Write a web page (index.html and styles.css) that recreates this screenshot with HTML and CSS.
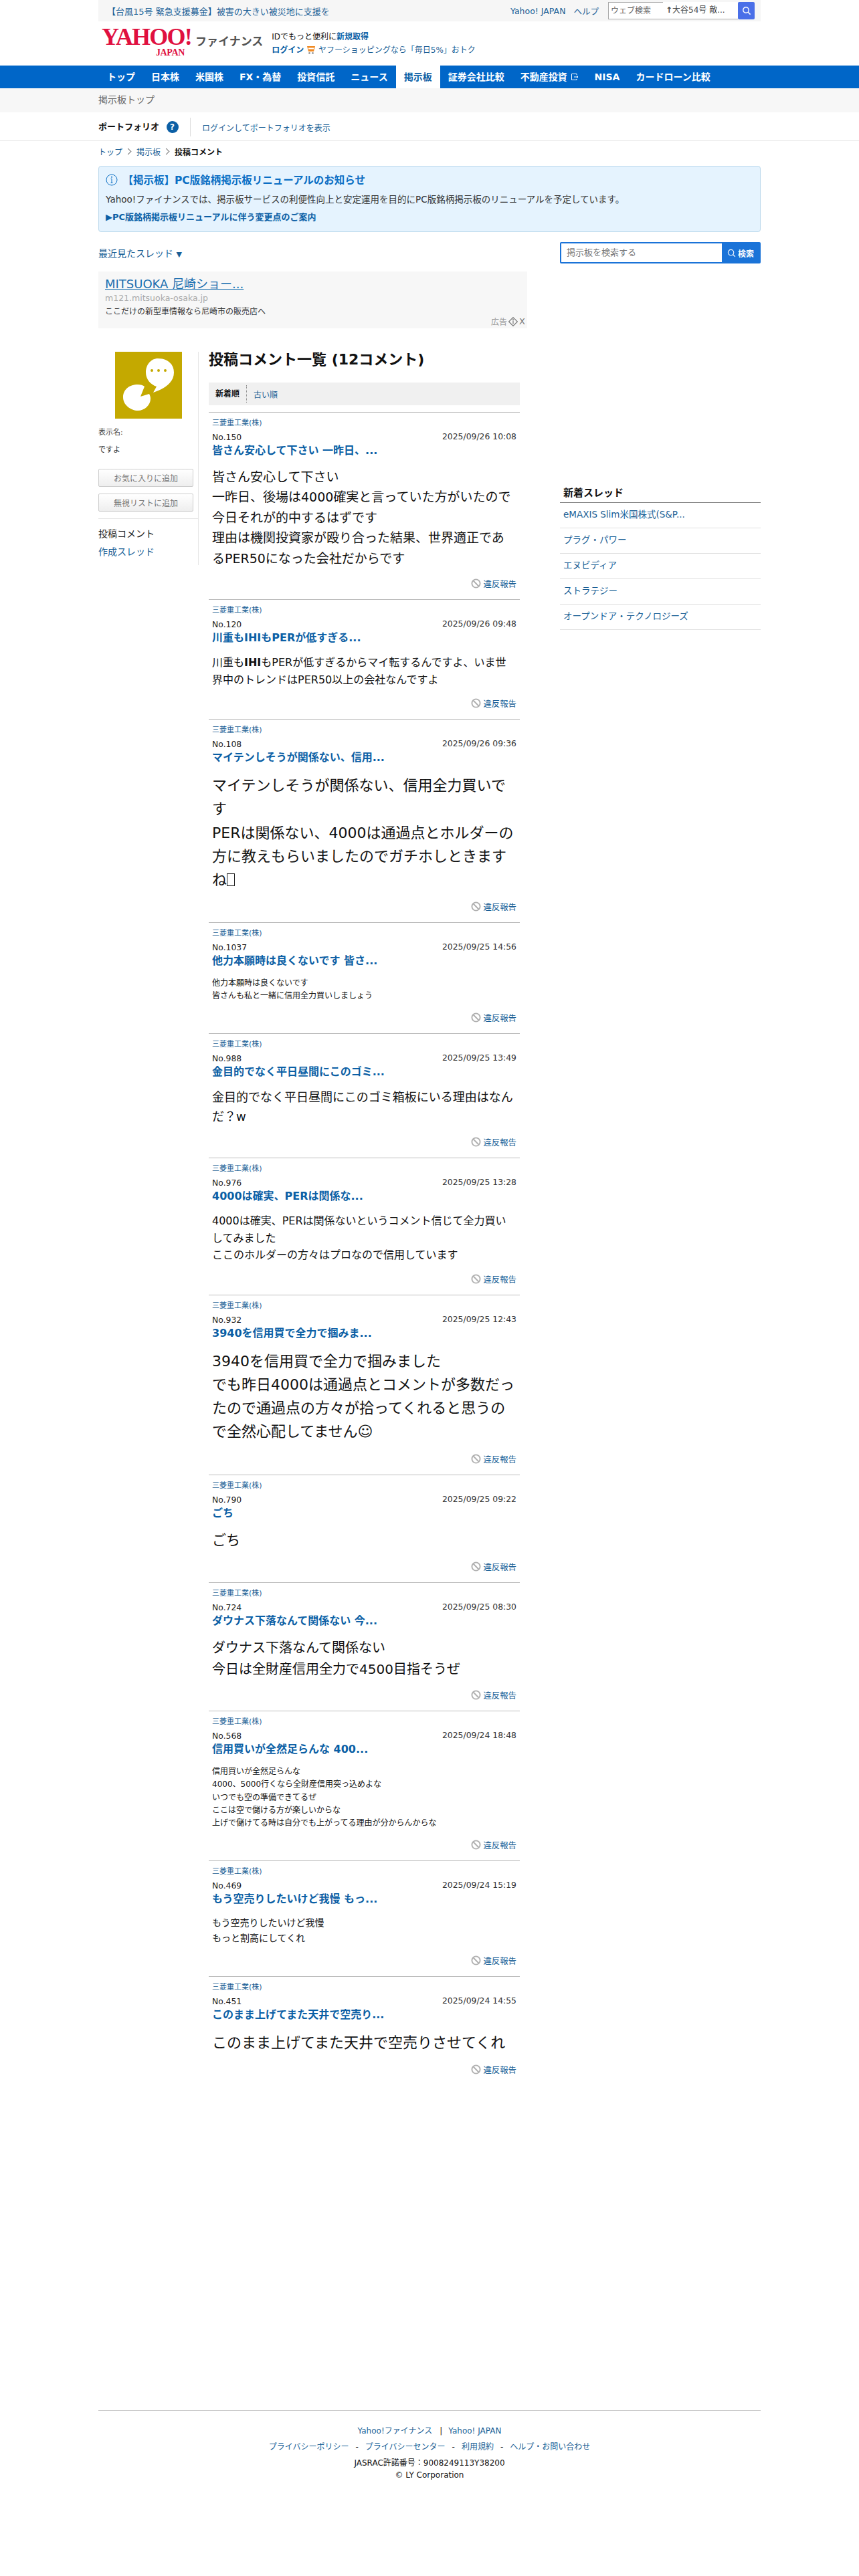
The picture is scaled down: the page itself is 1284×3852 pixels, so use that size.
FILE: index.html
```html
<!DOCTYPE html>
<html lang="ja">
<head>
    <meta charset="UTF-8">
    <title>投稿コメント一覧 - Yahoo!ファイナンス</title>
    <link rel="stylesheet" href="styles.css">
</head>
<body>

<div class="wrap topbar">
    <a class="topbar-news" href="#">【台風15号 緊急支援募金】被害の大きい被災地に支援を</a>
    <div class="topbar-right">
        <a href="#">Yahoo! JAPAN</a>
        <a href="#">ヘルプ</a>
        <div class="websearch">
            <span class="websearch-input">ウェブ検索</span>
            <span class="websearch-hint"><b>↑</b>大谷54号 敵...</span>
            <span class="websearch-btn">
                <svg width="14" height="14" viewBox="0 0 14 14"><circle cx="6" cy="6" r="4.2" fill="none" stroke="#fff" stroke-width="1.4"/><path d="M9 9l3.6 3.6" stroke="#fff" stroke-width="1.5"/></svg>
            </span>
        </div>
    </div>
</div>

<div class="wrap header">
    <a class="logo" href="#">
        <span class="logo-main">YAHOO!</span>
        <span class="logo-jp">JAPAN</span>
    </a>
    <span class="logo-finance">ファイナンス</span>
    <div class="header-links">
        <div>IDでもっと便利に<a class="strong" href="#">新規取得</a></div>
        <div>
            <a class="strong" href="#">ログイン</a>
            <svg class="cart" width="14" height="15" viewBox="0 0 14 15"><path d="M1 2h12l-2 8H3z" fill="#f08a24"/><rect x="3" y="4.5" width="8" height="2" fill="#fff"/><circle cx="4.5" cy="12.5" r="1.4" fill="#999"/><circle cx="9.5" cy="12.5" r="1.4" fill="#999"/></svg>
            <a href="#">ヤフーショッピングなら「毎日5%」おトク</a>
        </div>
    </div>
</div>

<nav class="nav">
    <div class="wrap nav-inner">
        <a href="#">トップ</a>
        <a href="#">日本株</a>
        <a href="#">米国株</a>
        <a href="#">FX・為替</a>
        <a href="#">投資信託</a>
        <a href="#">ニュース</a>
        <a class="active" href="#">掲示板</a>
        <a href="#">証券会社比較</a>
        <a href="#">不動産投資
            <svg width="12" height="12" viewBox="0 0 12 12"><path d="M9 3V1.5H1.5v9H9V9M5 6h6M9 4l2 2-2 2" fill="none" stroke="#fff"/></svg>
        </a>
        <a href="#">NISA</a>
        <a href="#">カードローン比較</a>
    </div>
</nav>

<div class="subnav">
    <div class="wrap">掲示板トップ</div>
</div>

<div class="portfolio">
    <div class="wrap portfolio-inner">
        <div class="portfolio-label">ポートフォリオ <span class="help">?</span></div>
        <a href="#">ログインしてポートフォリオを表示</a>
    </div>
</div>

<div class="wrap crumbs">
    <a href="#">トップ</a>
    <span class="crumb-arrow"></span>
    <a href="#">掲示板</a>
    <span class="crumb-arrow"></span>
    <strong>投稿コメント</strong>
</div>

<div class="wrap notice">
    <h2>
        <svg width="18" height="18" viewBox="0 0 18 18"><circle cx="9" cy="9" r="8" fill="none" stroke="#0b6fc4"/><path d="M9 7.5v6M7.5 7.5H9M7.5 13.5h3" fill="none" stroke="#0b6fc4"/><circle cx="9" cy="4.8" r="1" fill="#0b6fc4"/></svg>
        【掲示板】PC版銘柄掲示板リニューアルのお知らせ
    </h2>
    <p>Yahoo!ファイナンスでは、掲示板サービスの利便性向上と安定運用を目的にPC版銘柄掲示板のリニューアルを予定しています。</p>
    <a href="#">▶PC版銘柄掲示板リニューアルに伴う変更点のご案内</a>
</div>

<div class="wrap main">
    <div class="left">
        <a class="recent" href="#">最近見たスレッド <span class="recent-arrow">▼</span></a>

        <div class="ad">
            <a class="ad-title" href="#">MITSUOKA 尼崎ショー...</a>
            <div class="ad-url">m121.mitsuoka-osaka.jp</div>
            <div class="ad-text">ここだけの新型車情報なら尼崎市の販売店へ</div>
            <div class="ad-mark">広告
                <svg width="14" height="14" viewBox="0 0 12 12"><path d="M6 .5L11.5 6 6 11.5.5 6z" fill="none" stroke="#777"/><path d="M6 4.5V9" stroke="#777"/><circle cx="6" cy="3" r=".8" fill="#777"/></svg>
                <span>X</span>
            </div>
        </div>

        <div class="columns">
            <aside class="profile">
                <div class="avatar">
                    <svg width="100" height="100" viewBox="0 0 100 100">
                        <rect width="100" height="100" fill="#c4a900"/>
                        <path d="M64 10c15 0 24 9 24 21 0 16-16 25-31 30l5-9c-9-3-16-11-16-21 0-12 8-21 18-21z" fill="#fff"/>
                        <circle cx="55" cy="28" r="2" fill="#c4a900"/><circle cx="65" cy="28" r="2" fill="#c4a900"/><circle cx="75" cy="28" r="2" fill="#c4a900"/>
                        <path d="M34 49c4 0 8 1 10 3l-6 15 13-4c1 2 2 4 2 7 0 10-9 18-19 18S12 80 12 68s10-19 22-19z" fill="#fff"/>
                    </svg>
                </div>
                <div class="profile-label">表示名:</div>
                <div class="profile-name">ですよ</div>
                <button class="profile-btn">お気に入りに追加</button>
                <button class="profile-btn">無視リストに追加</button>
                <div class="profile-nav">
                    <div>投稿コメント</div>
                    <a href="#">作成スレッド</a>
                </div>
            </aside>

            <section class="comments">
                <h1>投稿コメント一覧 (12コメント)</h1>
                <div class="sort">
                    <strong>新着順</strong>
                    <a href="#">古い順</a>
                </div>

                <article class="item">
                    <a class="company" href="#">三菱重工業(株)</a>
                    <div class="meta"><span>No.150</span><span class="date">2025/09/26 10:08</span></div>
                    <a class="item-title" href="#">皆さん安心して下さい 一昨日、...</a>
                    <p class="body sz19">皆さん安心して下さい<br>一昨日、後場は4000確実と言っていた方がいたので<br>今日それが的中するはずです<br>理由は機関投資家が殴り合った結果、世界適正であるPER50になった会社だからです</p>
                    <div class="report"><svg class="ban" viewBox="0 0 16 16"><circle cx="8" cy="8" r="6.5"/><path d="M3.5 3.5l9 9"/></svg><a href="#">違反報告</a></div>
                </article>

                <article class="item">
                    <a class="company" href="#">三菱重工業(株)</a>
                    <div class="meta"><span>No.120</span><span class="date">2025/09/26 09:48</span></div>
                    <a class="item-title" href="#">川重もIHIもPERが低すぎる...</a>
                    <p class="body sz16">川重も<b>IHI</b>もPERが低すぎるからマイ転するんですよ、いま世界中のトレンドはPER50以上の会社なんですよ</p>
                    <div class="report"><svg class="ban" viewBox="0 0 16 16"><circle cx="8" cy="8" r="6.5"/><path d="M3.5 3.5l9 9"/></svg><a href="#">違反報告</a></div>
                </article>

                <article class="item">
                    <a class="company" href="#">三菱重工業(株)</a>
                    <div class="meta"><span>No.108</span><span class="date">2025/09/26 09:36</span></div>
                    <a class="item-title" href="#">マイテンしそうが関係ない、信用...</a>
                    <p class="body sz22">マイテンしそうが関係ない、信用全力買いです<br>PERは関係ない、4000は通過点とホルダーの方に教えもらいましたのでガチホしときますね<span class="tofu"></span></p>
                    <div class="report"><svg class="ban" viewBox="0 0 16 16"><circle cx="8" cy="8" r="6.5"/><path d="M3.5 3.5l9 9"/></svg><a href="#">違反報告</a></div>
                </article>

                <article class="item">
                    <a class="company" href="#">三菱重工業(株)</a>
                    <div class="meta"><span>No.1037</span><span class="date">2025/09/25 14:56</span></div>
                    <a class="item-title" href="#">他力本願時は良くないです 皆さ...</a>
                    <p class="body sz12">他力本願時は良くないです<br>皆さんも私と一緒に信用全力買いしましょう</p>
                    <div class="report"><svg class="ban" viewBox="0 0 16 16"><circle cx="8" cy="8" r="6.5"/><path d="M3.5 3.5l9 9"/></svg><a href="#">違反報告</a></div>
                </article>

                <article class="item">
                    <a class="company" href="#">三菱重工業(株)</a>
                    <div class="meta"><span>No.988</span><span class="date">2025/09/25 13:49</span></div>
                    <a class="item-title" href="#">金目的でなく平日昼間にこのゴミ...</a>
                    <p class="body sz18">金目的でなく平日昼間にこのゴミ箱板にいる理由はなんだ？w</p>
                    <div class="report"><svg class="ban" viewBox="0 0 16 16"><circle cx="8" cy="8" r="6.5"/><path d="M3.5 3.5l9 9"/></svg><a href="#">違反報告</a></div>
                </article>

                <article class="item">
                    <a class="company" href="#">三菱重工業(株)</a>
                    <div class="meta"><span>No.976</span><span class="date">2025/09/25 13:28</span></div>
                    <a class="item-title" href="#">4000は確実、PERは関係な...</a>
                    <p class="body sz16">4000は確実、PERは関係ないというコメント信じて全力買いしてみました<br>ここのホルダーの方々はプロなので信用しています</p>
                    <div class="report"><svg class="ban" viewBox="0 0 16 16"><circle cx="8" cy="8" r="6.5"/><path d="M3.5 3.5l9 9"/></svg><a href="#">違反報告</a></div>
                </article>

                <article class="item">
                    <a class="company" href="#">三菱重工業(株)</a>
                    <div class="meta"><span>No.932</span><span class="date">2025/09/25 12:43</span></div>
                    <a class="item-title" href="#">3940を信用買で全力で掴みま...</a>
                    <p class="body sz22">3940を信用買で全力で掴みました<br>でも昨日4000は通過点とコメントが多数だったので通過点の方々が拾ってくれると思うので全然心配してません☺</p>
                    <div class="report"><svg class="ban" viewBox="0 0 16 16"><circle cx="8" cy="8" r="6.5"/><path d="M3.5 3.5l9 9"/></svg><a href="#">違反報告</a></div>
                </article>

                <article class="item">
                    <a class="company" href="#">三菱重工業(株)</a>
                    <div class="meta"><span>No.790</span><span class="date">2025/09/25 09:22</span></div>
                    <a class="item-title" href="#">ごち</a>
                    <p class="body sz21">ごち</p>
                    <div class="report"><svg class="ban" viewBox="0 0 16 16"><circle cx="8" cy="8" r="6.5"/><path d="M3.5 3.5l9 9"/></svg><a href="#">違反報告</a></div>
                </article>

                <article class="item">
                    <a class="company" href="#">三菱重工業(株)</a>
                    <div class="meta"><span>No.724</span><span class="date">2025/09/25 08:30</span></div>
                    <a class="item-title" href="#">ダウナス下落なんて関係ない 今...</a>
                    <p class="body sz20">ダウナス下落なんて関係ない<br>今日は全財産信用全力で4500目指そうぜ</p>
                    <div class="report"><svg class="ban" viewBox="0 0 16 16"><circle cx="8" cy="8" r="6.5"/><path d="M3.5 3.5l9 9"/></svg><a href="#">違反報告</a></div>
                </article>

                <article class="item">
                    <a class="company" href="#">三菱重工業(株)</a>
                    <div class="meta"><span>No.568</span><span class="date">2025/09/24 18:48</span></div>
                    <a class="item-title" href="#">信用買いが全然足らんな 400...</a>
                    <p class="body sz12">信用買いが全然足らんな<br>4000、5000行くなら全財産信用突っ込めよな<br>いつでも空の準備できてるぜ<br>ここは空で儲ける方が楽しいからな<br>上げで儲けてる時は自分でも上がってる理由が分からんからな</p>
                    <div class="report"><svg class="ban" viewBox="0 0 16 16"><circle cx="8" cy="8" r="6.5"/><path d="M3.5 3.5l9 9"/></svg><a href="#">違反報告</a></div>
                </article>

                <article class="item">
                    <a class="company" href="#">三菱重工業(株)</a>
                    <div class="meta"><span>No.469</span><span class="date">2025/09/24 15:19</span></div>
                    <a class="item-title" href="#">もう空売りしたいけど我慢 もっ...</a>
                    <p class="body sz14">もう空売りしたいけど我慢<br>もっと割高にしてくれ</p>
                    <div class="report"><svg class="ban" viewBox="0 0 16 16"><circle cx="8" cy="8" r="6.5"/><path d="M3.5 3.5l9 9"/></svg><a href="#">違反報告</a></div>
                </article>

                <article class="item">
                    <a class="company" href="#">三菱重工業(株)</a>
                    <div class="meta"><span>No.451</span><span class="date">2025/09/24 14:55</span></div>
                    <a class="item-title" href="#">このまま上げてまた天井で空売り...</a>
                    <p class="body sz22">このまま上げてまた天井で空売りさせてくれ</p>
                    <div class="report"><svg class="ban" viewBox="0 0 16 16"><circle cx="8" cy="8" r="6.5"/><path d="M3.5 3.5l9 9"/></svg><a href="#">違反報告</a></div>
                </article>
            </section>
        </div>
    </div>

    <aside class="right">
        <div class="board-search">
            <span class="board-search-input">掲示板を検索する</span>
            <span class="board-search-btn">
                <svg width="13" height="13" viewBox="0 0 14 14"><circle cx="6" cy="6" r="4.5" fill="none" stroke="#fff" stroke-width="1.2"/><path d="M9.2 9.2l3.6 3.6" stroke="#fff" stroke-width="1.3"/></svg>
                検索
            </span>
        </div>

        <h3 class="side-title">新着スレッド</h3>
        <ul class="side-list">
            <li><a href="#">eMAXIS Slim米国株式(S&amp;P...</a></li>
            <li><a href="#">プラグ・パワー</a></li>
            <li><a href="#">エヌビディア</a></li>
            <li><a href="#">ストラテジー</a></li>
            <li><a href="#">オープンドア・テクノロジーズ</a></li>
        </ul>
    </aside>
</div>

<footer class="wrap footer">
    <div class="footer-row"><a href="#">Yahoo!ファイナンス</a><span class="sep">|</span><a href="#">Yahoo! JAPAN</a></div>
    <div class="footer-row"><a href="#">プライバシーポリシー</a><span class="dash">-</span><a href="#">プライバシーセンター</a><span class="dash">-</span><a href="#">利用規約</a><span class="dash">-</span><a href="#">ヘルプ・お問い合わせ</a></div>
    <div class="footer-copy">JASRAC許諾番号：9008249113Y38200</div>
    <div class="footer-copy">© LY Corporation</div>
</footer>

</body>
</html>
```

FILE: styles.css
```css
* {
    box-sizing: border-box;
}
body {
    margin: 0;
    background: #fff;
    color: #111;
    font-family: "DejaVu Sans", "Noto Sans CJK JP", sans-serif;
    font-size: 12px;
}
a {
    color: #1a5f96;
    text-decoration: none;
}
.wrap {
    width: 990px;
    margin: 0 auto;
}

/* top bar */
.topbar {
    height: 32px;
    padding: 0 9px 0 13px;
    background: #f6f6f6;
    display: flex;
    align-items: center;
    justify-content: space-between;
}
.topbar-news {
    font-size: 13px;
}
.topbar-right {
    display: flex;
    align-items: center;
    gap: 12px;
    font-size: 12.5px;
}
.websearch {
    display: flex;
    align-items: stretch;
    height: 26px;
    margin-left: 2px;
    font-size: 12px;
}
.websearch-input {
    width: 82px;
    border: 1px solid #aaa;
    border-right: 0;
    background: #fff;
    color: #666;
    padding: 0 3px;
    line-height: 24px;
}
.websearch-hint {
    width: 112px;
    background: #fff;
    color: #444;
    padding: 0 4px;
    line-height: 24px;
    border-bottom: 1px solid #aaa;
    white-space: nowrap;
}
.websearch-btn {
    width: 25px;
    background: #4a6fe8;
    border-radius: 2px;
    display: flex;
    align-items: center;
    justify-content: center;
}

/* header */
.header {
    height: 66px;
    padding-left: 5px;
    display: flex;
    align-items: flex-start;
}
.logo {
    display: block;
    width: 140px;
    padding-top: 7px;
    color: #e0103f;
    font-family: "Liberation Serif", serif;
    font-weight: bold;
}
.logo-main {
    display: block;
    font-size: 36px;
    line-height: 33px;
    letter-spacing: -1.8px;
    white-space: nowrap;
}
.logo-jp {
    display: block;
    font-size: 14px;
    line-height: 13px;
    margin-top: 0;
    padding-left: 81px;
    letter-spacing: -0.4px;
}
.logo-finance {
    margin-top: 16px;
    font-size: 17px;
    font-weight: bold;
    color: #555;
    white-space: nowrap;
}
.header-links {
    margin: 14px 0 0 13px;
    font-size: 12px;
    line-height: 18px;
}
.header-links > div + div {
    margin-top: 2px;
}
.strong {
    font-weight: bold;
    color: #0b5fa5;
}
.cart {
    vertical-align: -3px;
}

/* global nav */
.nav {
    background: #0066c8;
    height: 34px;
}
.nav-inner {
    display: flex;
    padding-left: 1px;
}
.nav a {
    padding: 0 12px;
    color: #fff;
    font-size: 14px;
    font-weight: bold;
    line-height: 34px;
    white-space: nowrap;
}
.nav a.active {
    background: #fff;
    color: #0b5fa5;
}
.nav svg {
    vertical-align: -1px;
}
.subnav {
    height: 36px;
    background: #f7f7f7;
    color: #666;
    font-size: 14px;
    line-height: 35px;
}

/* portfolio */
.portfolio {
    height: 43px;
    border-bottom: 1px solid #e6e6e6;
}
.portfolio-inner {
    display: flex;
    align-items: center;
    padding-top: 8px;
    box-sizing: content-box;
    height: 28px;
}
.portfolio-label {
    font-size: 13px;
    font-weight: bold;
    width: 138px;
    height: 28px;
    line-height: 28px;
    border-right: 1px solid #ddd;
    margin-right: 17px;
    white-space: nowrap;
}
.help {
    display: inline-block;
    width: 18px;
    height: 18px;
    margin-left: 6px;
    border-radius: 50%;
    background: #0b5fa5;
    color: #fff;
    font-size: 12px;
    line-height: 18px;
    text-align: center;
}
.portfolio-inner a {
    font-size: 12px;
}

/* breadcrumbs */
.crumbs {
    height: 37px;
    display: flex;
    align-items: center;
    font-size: 12px;
    padding-bottom: 6px;
}
.crumb-arrow {
    width: 7px;
    height: 7px;
    margin: 0 9px 0 5px;
    border-top: 1px solid #777;
    border-right: 1px solid #777;
    transform: rotate(45deg);
}

/* notice */
.notice {
    height: 99px;
    padding: 10px 10px;
    background: #e5f3fe;
    border: 1px solid #bcd9ec;
    border-radius: 4px;
}
.notice h2 {
    margin: 0;
    font-size: 15.5px;
    line-height: 22px;
    color: #0b6fc4;
    white-space: nowrap;
}
.notice h2 svg {
    vertical-align: -3px;
    margin-right: 2px;
}
.notice p {
    margin: 8px 0 0;
    font-size: 13.5px;
    line-height: 18px;
    color: #333;
    white-space: nowrap;
}
.notice a {
    display: block;
    margin-top: 9px;
    font-size: 13px;
    line-height: 18px;
    font-weight: bold;
    color: #0b5fa5;
}

/* main layout */
.main {
    margin-top: 15px;
    display: flex;
    justify-content: space-between;
    align-items: flex-start;
}
.left {
    width: 641px;
}
.right {
    width: 300px;
}
.recent {
    display: block;
    height: 44px;
    font-size: 14px;
    line-height: 34px;
}
.recent-arrow {
    font-size: 11px;
}

/* ad */
.ad {
    position: relative;
    height: 85px;
    padding: 8px 10px;
    background: #f7f7f7;
}
.ad-title {
    display: block;
    font-size: 18px;
    line-height: 22px;
    color: #1a6fb0;
    text-decoration: underline;
}
.ad-url {
    font-size: 12.5px;
    line-height: 20px;
    color: #aaa;
}
.ad-text {
    font-size: 12px;
    line-height: 20px;
    color: #333;
}
.ad-mark {
    position: absolute;
    right: 3px;
    bottom: 2px;
    display: flex;
    align-items: center;
    gap: 2px;
    color: #999;
    font-size: 12px;
}
.ad-mark span {
    color: #777;
    font-size: 13px;
}

.columns {
    display: flex;
    margin-top: 35px;
}

/* profile */
.profile {
    width: 150px;
    height: 319px;
    padding-right: 8px;
    border-right: 1px solid #e6e6e6;
}
.avatar {
    width: 100px;
    height: 100px;
    margin-left: 25px;
}
.avatar svg {
    display: block;
}
.profile-label {
    margin-top: 14px;
    font-size: 11px;
    line-height: 14px;
    color: #444;
}
.profile-name {
    margin-top: 12px;
    font-size: 11px;
    line-height: 14px;
    color: #333;
}
.profile-btn {
    display: block;
    width: 142px;
    height: 27px;
    margin-top: 10px;
    padding: 0;
    border: 1px solid #ccc;
    border-radius: 2px;
    background: linear-gradient(#fff, #eee);
    color: #777;
    font-family: inherit;
    font-size: 12px;
}
.profile-name + .profile-btn {
    margin-top: 21px;
}
.profile-nav {
    margin: 10px -8px 0 0;
    padding-top: 12px;
    border-top: 1px solid #e6e6e6;
    font-size: 14px;
    line-height: 20px;
    color: #222;
}
.profile-nav a {
    display: block;
    margin-top: 7px;
}

/* comment list */
.comments {
    width: 465px;
    margin-left: 15px;
}
.comments h1 {
    margin: 0;
    height: 46px;
    font-size: 22px;
    line-height: 24px;
}
.sort {
    height: 34px;
    padding: 0 10px;
    background: #f0f0f0;
    display: flex;
    align-items: center;
    font-size: 12px;
}
.sort strong {
    padding-right: 10px;
    border-right: 1px dotted #888;
    line-height: 26px;
}
.sort a {
    margin-left: 10px;
}
.item {
    margin-top: 10px;
    padding: 0 5px 14px;
    border-top: 1px solid #bbb;
}
.item + .item {
    margin-top: 0;
}
.company {
    display: block;
    margin-top: 9px;
    font-size: 11px;
    line-height: 14px;
}
.meta {
    margin-top: 6px;
    display: flex;
    justify-content: space-between;
    font-size: 12.4px;
    line-height: 16px;
    color: #222;
}
.date {
    color: #333;
    margin-top: -1px;
}
.item-title {
    display: block;
    margin-top: 2px;
    font-size: 16px;
    line-height: 20px;
    font-weight: bold;
    color: #0b5fa5;
}
.body {
    margin: 14px 0 0;
    line-height: 1.6;
    color: #111;
    word-break: break-all;
}
.sz12 { font-size: 12px; }
.sz14 { font-size: 14px; }
.sz16 { font-size: 16px; }
.sz18 { font-size: 18px; }
.sz19 { font-size: 19px; }
.sz20 { font-size: 20px; }
.sz21 { font-size: 21px; }
.sz22 { font-size: 22px; }
.tofu {
    display: inline-block;
    width: 12px;
    height: 19px;
    border: 1px solid #222;
    vertical-align: -2px;
}
.report {
    margin-top: 16px;
    height: 16px;
    display: flex;
    justify-content: flex-end;
    align-items: center;
    gap: 3px;
    font-size: 12.4px;
    line-height: 16px;
}
.ban {
    width: 15px;
    height: 15px;
    margin-top: -3px;
    fill: none;
    stroke: #b0b0b0;
    stroke-width: 2;
}

/* right column */
.board-search {
    height: 32px;
    display: flex;
    border: 2px solid #1a73d8;
    border-radius: 2px;
}
.board-search-input {
    flex: 1;
    padding-left: 8px;
    line-height: 28px;
    color: #777;
    font-size: 13px;
}
.board-search-btn {
    width: 56px;
    background: #1a73d8;
    color: #fff;
    font-weight: bold;
    font-size: 12px;
    display: flex;
    align-items: center;
    justify-content: center;
    gap: 3px;
}
.side-title {
    margin: 333px 0 0;
    padding: 0 5px 4px;
    font-size: 15px;
    line-height: 20px;
    border-bottom: 1px solid #808080;
}
.side-list {
    margin: 0;
    padding: 0;
    list-style: none;
}
.side-list li {
    height: 38px;
    padding-left: 5px;
    border-bottom: 1px solid #e0e0e0;
    font-size: 13.5px;
    line-height: 34px;
    white-space: nowrap;
}

/* footer */
.footer {
    margin-top: 486px;
    padding-top: 21px;
    border-top: 1px solid #ccc;
    text-align: center;
    font-size: 12px;
}
.footer-row {
    line-height: 18px;
    margin-bottom: 6px;
}
.sep {
    margin: 0 9px 0 11px;
}
.dash {
    margin: 0 10px;
}
.footer-copy {
    line-height: 18px;
    color: #111;
}
.footer-row + .footer-copy {
    margin-top: 4px;
}
```
